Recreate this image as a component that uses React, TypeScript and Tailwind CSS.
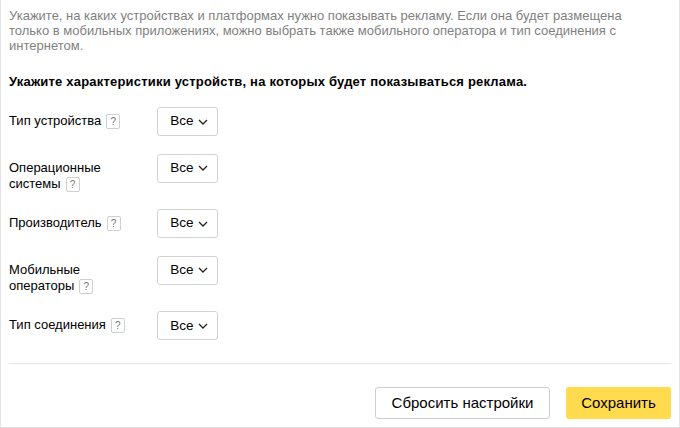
const rows = [
  "Тип устройства",
  "Операционные системы",
  "Производитель",
  "Мобильные операторы",
  "Тип соединения",
];

function Hint() {
  return (
    <span className="ml-[5px] inline-block h-[15px] w-[14px] rounded-[2px] border border-[#cfcfcf] text-center align-middle text-[10px] leading-[13px] text-[#777]">
      ?
    </span>
  );
}

function Select() {
  return (
    <button
      type="button"
      className="flex h-[29px] w-[61px] items-center justify-center gap-[4px] rounded-[3px] border border-[#d3d3d3] bg-white pl-[3px] text-[13.5px] text-black"
    >
      Все
      <svg width="10" height="6" viewBox="0 0 10 6" fill="none" aria-hidden>
        <polyline points="1,1 5,5 9,1" stroke="#222" strokeWidth="1.3" />
      </svg>
    </button>
  );
}

export default function App() {
  return (
    <div
      className="flex h-[428px] w-[680px] flex-col border-x border-b border-[#e3e3e3] bg-white"
      style={{ fontFamily: '"Liberation Sans", Arial, sans-serif' }}
    >
      <p className="pl-[8px] pr-[31px] pt-[8px] text-[13px] leading-[15px] text-[#7f7f7f]">
        Укажите, на каких устройствах и платформах нужно показывать рекламу. Если она будет размещена
        только в мобильных приложениях, можно выбрать также мобильного оператора и тип соединения с
        интернетом.
      </p>
      <p className="mt-[21px] px-[8px] text-[13px] font-bold leading-[15px] tracking-[0.2px] text-black">
        Укажите характеристики устройств, на которых будет показываться реклама.
      </p>
      <div className="mt-[18px] flex flex-col gap-[17.5px] px-[8px]">
        {rows.map((label) => (
          <div key={label} className="flex items-start">
            <div className="w-[132px] pt-[6px] text-[13px] leading-[16px] text-black">
              {label}
              <Hint />
            </div>
            <div className="ml-[16px]">
              <Select />
            </div>
          </div>
        ))}
      </div>
      <div className="mx-[8px] mt-auto border-t border-[#e6e6e6]" />
      <div className="flex justify-end gap-[16px] px-[8px] pb-[8px] pt-[23px]">
        <button
          type="button"
          className="h-[32px] w-[175px] rounded-[3px] border border-[#cdcdcd] bg-white text-[15px] text-black"
        >
          Сбросить настройки
        </button>
        <button
          type="button"
          className="h-[32px] w-[105px] rounded-[3px] bg-[#ffdb4d] text-[15px] text-black"
        >
          Сохранить
        </button>
      </div>
    </div>
  );
}
